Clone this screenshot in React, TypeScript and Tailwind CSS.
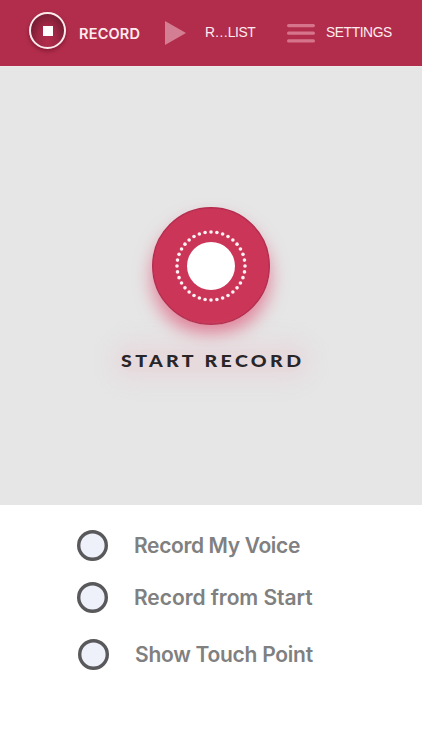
const dots = Array.from({ length: 36 }, (_, i) => {
  const angle = (i * Math.PI) / 18;
  return { x: 59 + 34 * Math.sin(angle), y: 59 - 34 * Math.cos(angle) };
});

function StopIcon() {
  return (
    <span className="ml-[29px] mt-3 flex size-[37px] shrink-0 items-center justify-center rounded-full border-2 border-[#fbe9ec] bg-radial-[at_50%_85%] from-[#b22d4c] via-[#9c2744] via-45% to-[#5e1427] shadow-[0_2px_4px_rgba(70,0,20,0.45)]">
      <span className="size-[10px] bg-white" />
    </span>
  );
}

function Header() {
  return (
    <nav className="flex h-[66px] items-start bg-[#b22d4c] text-[#fdebef]">
      <button className="flex w-[165px] shrink-0 items-start">
        <StopIcon />
        <span className="ml-[13px] mt-6 whitespace-nowrap font-['Inter'] text-[14.5px] leading-5 font-semibold tracking-[0.2px]">RECORD</span>
      </button>
      <button className="flex w-[122px] shrink-0 items-start">
        <svg className="mt-[21px] h-6 w-[21px] shrink-0" viewBox="0 0 21 24">
          <path d="M0 0L21 12L0 24Z" fill="#d37e92" />
        </svg>
        <span className="ml-[19px] mt-[23px] whitespace-nowrap font-['Liberation_Sans'] text-[13.8px] leading-5 tracking-[-0.45px]">R…LIST</span>
      </button>
      <button className="flex items-start">
        <svg className="mt-[24px] h-[19px] w-[28px] shrink-0" viewBox="0 0 28 19" stroke="#d6748c" strokeWidth="3.2" strokeLinecap="round">
          <path d="M1.6 1.6H26.4M1.6 9.2H26.4M1.6 16.9H26.4" />
        </svg>
        <span className="ml-[11px] mt-[23px] whitespace-nowrap font-['Liberation_Sans'] text-[13.8px] leading-5 tracking-[-0.4px]">SETTINGS</span>
      </button>
    </nav>
  );
}

function RecordPanel() {
  return (
    <main className="flex h-[439px] flex-col items-center border-t border-[#efe9ea] bg-[#e6e6e6] pt-[140px]">
      <button aria-label="Start recording" className="size-[118px] rounded-full shadow-[0_11px_18px_0_rgba(221,64,104,0.6)]">
        <svg viewBox="0 0 118 118" className="size-[118px]">
          <circle cx="59" cy="59" r="58.3" fill="#cb3558" stroke="#b52d4e" strokeWidth="1.4" />
          {dots.map((dot, i) => (
            <circle key={i} cx={dot.x} cy={dot.y} r="1.8" fill="#fff2f5" />
          ))}
          <circle cx="59" cy="59" r="24" fill="white" />
        </svg>
      </button>
      <div className="mt-[25px] flex h-[22px] w-[180px] items-center rounded-full bg-[#e6dadd] shadow-[0_0_20px_10px_rgba(230,216,220,0.8)]">
        <span className="origin-left scale-x-115 whitespace-nowrap font-['Lato'] text-[17px] leading-[22px] font-black tracking-[2.95px] text-[#292629]">START RECORD</span>
      </div>
    </main>
  );
}

const options = [
  { label: "Record My Voice", row: "pl-[77px] pt-[25px]", text: "tracking-[-0.36px]" },
  { label: "Record from Start", row: "pl-[77px] pt-[21px]", text: "tracking-[-0.06px]" },
  { label: "Show Touch Point", row: "pl-[78px] pt-[26px]", text: "tracking-[-0.27px]" },
];

export default function App() {
  return (
    <div className="h-[750px] w-[422px] overflow-hidden bg-white">
      <Header />
      <RecordPanel />
      <section>
        {options.map((option) => (
          <label key={option.label} className={`flex items-center ${option.row}`}>
            <svg className="size-[31px] shrink-0" viewBox="0 0 31 31">
              <circle cx="15.5" cy="15.5" r="13.8" fill="#eef0fa" stroke="#59595c" strokeWidth="3.4" />
            </svg>
            <span className={`ml-[26px] whitespace-nowrap font-['Inter'] text-[21px] leading-[31px] font-semibold text-[#808080] ${option.text}`}>{option.label}</span>
          </label>
        ))}
      </section>
    </div>
  );
}
